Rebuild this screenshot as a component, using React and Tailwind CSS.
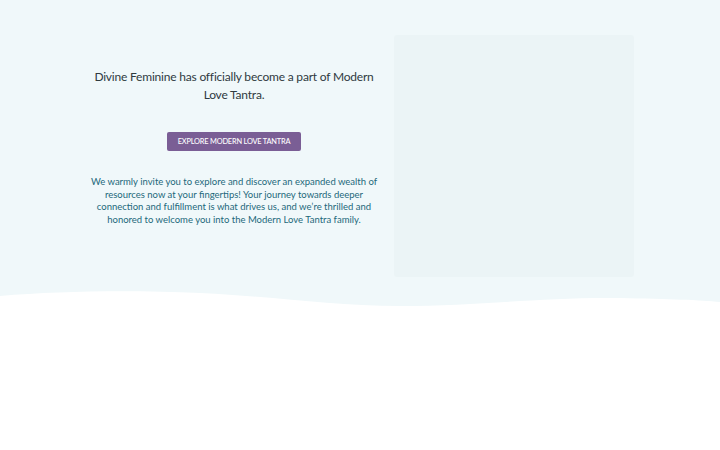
import React from 'react';

const App = () => {
    return (
        <div className="relative w-[720px] h-[450px] overflow-hidden bg-white" style={{ fontFamily: 'Lato, sans-serif' }}>
            <div className="bg-[#f0f8fa] h-[310px] relative">
                <div className="flex pl-[80px] pt-[35px] gap-[6px]">
                    <div className="w-[308px] flex flex-col items-center text-center">
                        <h1 className="mt-[33px] text-[12px] leading-[17.5px] tracking-[-0.2px] text-[#2f3a3f] px-[8px]">
                            Divine Feminine has officially become a part of Modern Love Tantra.
                        </h1>
                        <button className="mt-[29px] w-[134px] h-[19px] bg-[#7a5e95] text-white text-[7.4px] tracking-[-0.2px] rounded-[2px] font-medium">
                            EXPLORE MODERN LOVE TANTRA
                        </button>
                        <p className="mt-[25px] text-[9.5px] leading-[12.5px] text-[#1d687b] px-[8px]">
                            We warmly invite you to explore and discover an expanded wealth of resources now at your fingertips! Your journey towards deeper connection and fulfillment is what drives us, and we’re thrilled and honored to welcome you into the Modern Love Tantra family.
                        </p>
                    </div>
                    <div className="w-[240px] h-[242px] bg-[#ebf4f6] rounded-[3px]" />
                </div>
                <svg className="absolute left-0 bottom-0" width="720" height="30" viewBox="0 0 720 30" preserveAspectRatio="none">
                    <path d="M0 16 C 60 11, 130 10, 200 13 C 280 17, 330 26, 400 26 C 480 26, 540 17, 620 18 C 670 19, 700 20, 720 22 L720 30 L0 30 Z" fill="#ffffff" />
                </svg>
            </div>
        </div>
    );
};

export default App;
